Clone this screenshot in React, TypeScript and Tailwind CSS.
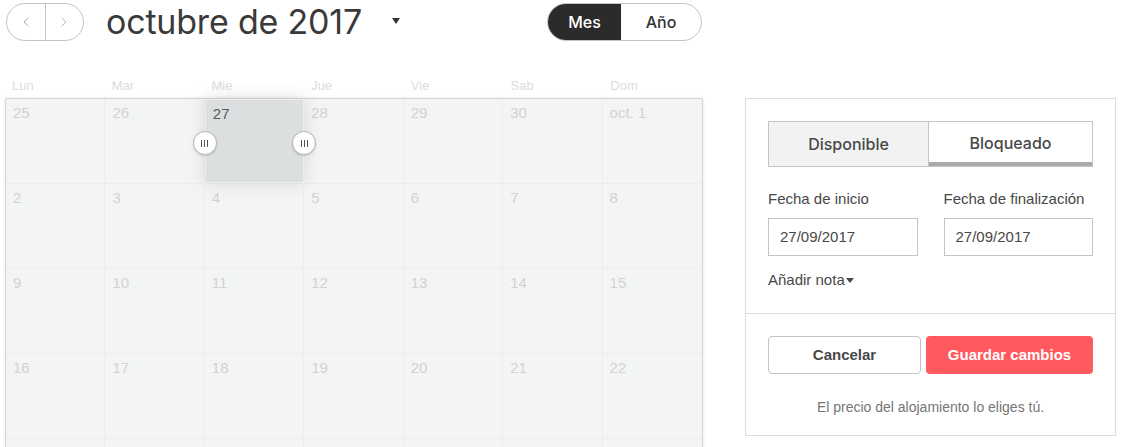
import { ChevronLeft, ChevronRight } from "lucide-react";

const weekdays = ["Lun", "Mar", "Mie", "Jue", "Vie", "Sab", "Dom"];

const weeks = [
  ["25", "26", "27", "28", "29", "30", "oct. 1"],
  ["2", "3", "4", "5", "6", "7", "8"],
  ["9", "10", "11", "12", "13", "14", "15"],
  ["16", "17", "18", "19", "20", "21", "22"],
  ["23", "24", "25", "26", "27", "28", "29"],
];

const Handle = ({ side }: { side: "left" | "right" }) => (
  <div
    className={`absolute top-[31px] z-20 flex h-[24px] w-[24px] items-center justify-center rounded-full border border-[#b5b5b5] bg-white shadow-[0_1px_2px_rgba(0,0,0,0.15)] ${
      side === "left" ? "left-[-13px]" : "right-[-13px]"
    }`}
  >
    <div className="flex gap-[2px]">
      <span className="h-[7px] w-[1px] bg-[#555]"></span>
      <span className="h-[7px] w-[1px] bg-[#555]"></span>
      <span className="h-[7px] w-[1px] bg-[#555]"></span>
    </div>
  </div>
);

const App = () => {
  return (
    <div className="h-[447px] w-full overflow-hidden bg-white pl-[5px] pt-[3px] font-['Liberation_Sans',Arial,sans-serif] text-[#484848]">
      <div className="flex">
        <div className="w-[698px]">
          {/* header */}
          <div className="flex h-[38px] items-center justify-between">
            <div className="flex items-center">
              <div className="ml-[1px] flex h-[38px] w-[78px] overflow-hidden rounded-full border border-[#c4c4c4]">
                <button className="flex flex-1 items-center justify-center border-r border-[#c4c4c4] text-[#9a9a9a]">
                  <ChevronLeft size={16} strokeWidth={1.25} />
                </button>
                <button className="flex flex-1 items-center justify-center text-[#c9a27a]">
                  <ChevronRight size={16} strokeWidth={1.25} />
                </button>
              </div>
              <h1 className="ml-[22px] font-['Inter',sans-serif] text-[34px] leading-none tracking-[-0.2px] text-[#3a3a3a]">octubre de 2017</h1>
              <span className="ml-[30px] mt-[-2px] h-0 w-0 border-x-[4px] border-t-[6px] border-x-transparent border-t-[#333]"></span>
            </div>
            <div className="mr-[1px] flex h-[38px] w-[155px] overflow-hidden rounded-full border border-[#c4c4c4] font-['Inter',sans-serif] text-[16px] font-medium">
              <div className="flex w-[73px] items-center justify-center bg-[#2b2b2b] text-white">Mes</div>
              <div className="flex flex-1 items-center justify-center text-[#333]">Año</div>
            </div>
          </div>

          {/* weekday labels */}
          <div className="mt-[37px] grid grid-cols-7">
            {weekdays.map((d) => (
              <div key={d} className="pl-[7px] text-[13px] leading-[16px] text-[#dcdcdc]">
                {d}
              </div>
            ))}
          </div>

          {/* grid */}
          <div className="mt-[4px] rounded-[2px] border border-[#d6d6d6] bg-[#f3f4f4] shadow-[0_0_3px_rgba(0,0,0,0.12)]">
            {weeks.map((week, wi) => (
              <div key={wi} className="grid grid-cols-7 border-b border-[#ededed]">
                {week.map((n, di) => {
                  const selected = wi === 0 && di === 2;
                  return (
                    <div
                      key={di}
                      className={`relative h-[84px] pl-[7px] pt-[5px] text-[15px] leading-[18px] ${
                        di < 6 ? "border-r border-[#ededed]" : ""
                      } ${
                        selected
                          ? "z-10 border border-[#c9cdcd] bg-[#dbdfe0] text-[#5a5a5a] shadow-[0_0_18px_rgba(0,0,0,0.12)]"
                          : "text-[#d2d2d2]"
                      }`}
                    >
                      {n}
                      {selected && (
                        <>
                          <Handle side="left" />
                          <Handle side="right" />
                        </>
                      )}
                    </div>
                  );
                })}
              </div>
            ))}
          </div>
        </div>

        {/* side panel */}
        <div className="ml-[42px] mt-[95px] h-[338px] w-[371px] border border-[#dcdcdc] bg-white">
          <div className="border-b border-[#dcdcdc] px-[22px] pb-[23px] pt-[22px]">
            <div className="flex h-[46px] border border-[#c4c4c4] font-['Inter',sans-serif] text-[16px] font-medium text-[#484848]">
              <div className="flex w-[160px] items-center justify-center border-r border-[#c4c4c4] bg-[#f2f2f2]">Disponible</div>
              <div className="flex flex-1 items-center justify-center border-b-[4px] border-[#aaaaaa] pt-[2px]">Bloqueado</div>
            </div>
            <div className="mt-[22px] grid grid-cols-2 gap-[26px]">
              <div>
                <div className="text-[15px] leading-[20px]">Fecha de inicio</div>
                <div className="mt-[9px] flex h-[38px] items-center border border-[#c4c4c4] px-[11px] text-[15px]">27/09/2017</div>
              </div>
              <div>
                <div className="text-[15px] leading-[20px]">Fecha de finalización</div>
                <div className="mt-[9px] flex h-[38px] items-center border border-[#c4c4c4] px-[11px] text-[15px]">27/09/2017</div>
              </div>
            </div>
            <div className="mt-[14px] flex items-center text-[15px] leading-[20px]">
              Añadir nota
              <span className="ml-[1px] mt-[1px] h-0 w-0 border-x-[4px] border-t-[5px] border-x-transparent border-t-[#484848]"></span>
            </div>
          </div>
          <div className="px-[22px] pt-[22px]">
            <div className="flex gap-[5px]">
              <button className="h-[38px] w-[153px] rounded-[4px] border border-[#c4c4c4] text-[15px] font-bold text-[#484848]">Cancelar</button>
              <button className="h-[38px] flex-1 rounded-[4px] bg-[#ff5a5f] text-[15px] font-bold text-white">Guardar cambios</button>
            </div>
            <p className="mt-[24px] text-center text-[14px] leading-[18px] text-[#767676]">El precio del alojamiento lo eliges tú.</p>
          </div>
        </div>
      </div>
    </div>
  );
};

export default App;
